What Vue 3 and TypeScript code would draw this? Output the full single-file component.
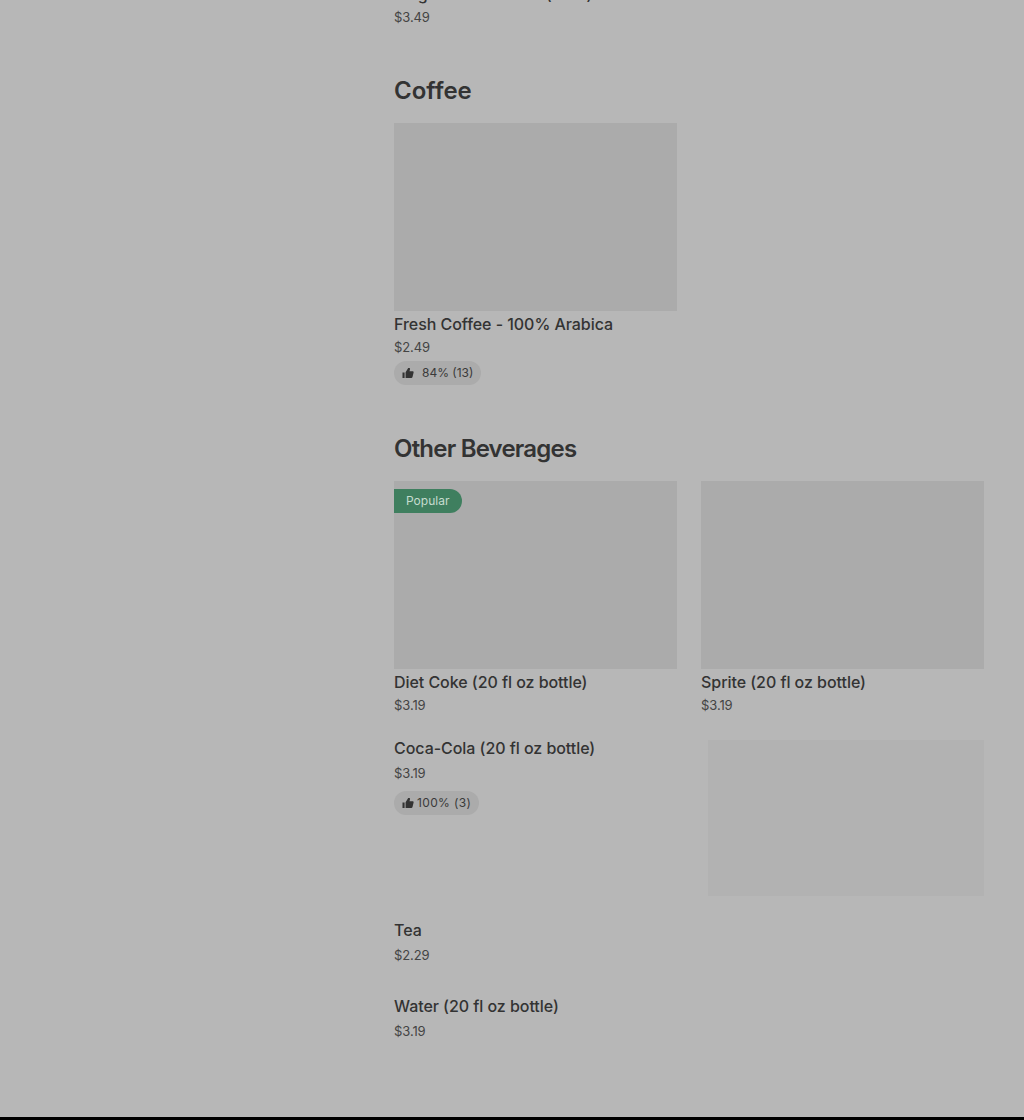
<script setup lang="ts">
interface Item { name: string; price: string; badge?: boolean }
const drinks: Item[] = [
  { name: 'Diet Coke (20 fl oz bottle)', price: '$3.19', badge: true },
  { name: 'Sprite (20 fl oz bottle)', price: '$3.19' },
]
</script>

<template>
  <div class="page">
    <main class="menu">
      <div class="clipped">
        <div class="name">Large White Mocha (16oz)</div>
        <div class="price">$3.49</div>
      </div>

      <section class="section">
        <h2 class="open">Coffee</h2>
        <div class="grid">
          <article>
            <div class="photo"></div>
            <div class="name">Fresh Coffee - 100% Arabica</div>
            <div class="price">$2.49</div>
            <div class="pill pill-wide">
              <svg viewBox="0 0 12 12" width="12" height="12"><path d="M0.5 5.5H2.6V11H0.5ZM3.6 11V5.3L6.2 1H7.2C7.9 1 8.2 1.6 8 2.3L7.5 4.3H10.6C11.4 4.3 11.8 4.9 11.6 5.6L10.5 10.1C10.3 10.7 9.9 11 9.3 11Z" /></svg>
              <span>84% (13)</span>
            </div>
          </article>
        </div>
      </section>

      <section class="section">
        <h2 class="tight">Other Beverages</h2>
        <div class="grid">
          <article v-for="d in drinks" :key="d.name">
            <div class="photo">
              <span v-if="d.badge" class="popular">Popular</span>
            </div>
            <div class="name">{{ d.name }}</div>
            <div class="price">{{ d.price }}</div>
          </article>
        </div>

        <div class="row coca">
          <div>
            <div class="name">Coca-Cola (20 fl oz bottle)</div>
            <div class="price loose">$3.19</div>
            <div class="pill pill-spaced">
              <svg viewBox="0 0 12 12" width="12" height="12"><path d="M0.5 5.5H2.6V11H0.5ZM3.6 11V5.3L6.2 1H7.2C7.9 1 8.2 1.6 8 2.3L7.5 4.3H10.6C11.4 4.3 11.8 4.9 11.6 5.6L10.5 10.1C10.3 10.7 9.9 11 9.3 11Z" /></svg>
              <span>100% (3)</span>
            </div>
          </div>
          <div class="thumb"></div>
        </div>

        <div class="row tea">
          <div>
            <div class="name">Tea</div>
            <div class="price loose">$2.29</div>
          </div>
        </div>

        <div class="row water">
          <div>
            <div class="name">Water (20 fl oz bottle)</div>
            <div class="price loose">$3.19</div>
          </div>
        </div>
      </section>
    </main>
    <footer class="bar"></footer>
  </div>
</template>

<style scoped>
.page {
  width: 1024px;
  height: 1120px;
  overflow: hidden;
  display: flex;
  flex-direction: column;
  background: #b7b7b7;
  font-family: Inter, "Liberation Sans", sans-serif;
  color: #333;
}
.menu {
  flex: 1;
  min-height: 0;
  padding: 0 40px 0 394px;
}
.clipped {
  margin-top: -16px;
}
.section {
  margin-top: 47px;
}
h2 {
  margin: 0 0 17px;
  padding-top: 1px;
  height: 32px;
  box-sizing: border-box;
  font-size: 24px;
  line-height: 31px;
  font-weight: 600;
  color: #333;
}
h2.open {
  letter-spacing: 0;
}
h2.tight {
  letter-spacing: -0.8px;
}
.grid {
  display: grid;
  grid-template-columns: 283px 283px;
  column-gap: 24px;
}
.photo {
  position: relative;
  height: 188px;
  background: #ababab;
  margin-bottom: 3px;
}
.popular {
  position: absolute;
  left: 0;
  top: 8px;
  width: 68px;
  height: 24px;
  box-sizing: border-box;
  padding-left: 12px;
  border-radius: 0 12px 12px 0;
  background: #3f7f5f;
  color: #c6dccf;
  font-size: 12px;
  line-height: 24px;
}
.name {
  font-size: 16px;
  line-height: 20px;
  font-weight: 500;
  letter-spacing: -0.05px;
  color: #333;
}
.price {
  margin-top: 3px;
  font-size: 13px;
  line-height: 20px;
  letter-spacing: -0.1px;
  color: #444;
}
.price.loose {
  margin-top: 5px;
}
.pill {
  display: flex;
  align-items: center;
  gap: 3px;
  width: max-content;
  height: 24px;
  margin-top: 8px;
  padding: 0 8px;
  border-radius: 12px;
  background: #ababab;
  color: #3a3a3a;
  font-size: 12px;
}
.pill span {
  padding-bottom: 1px;
}
article .pill {
  margin-top: 4px;
}
.pill-wide {
  gap: 8px;
}
.pill-spaced {
  letter-spacing: 0.35px;
}
.pill svg {
  fill: #333;
  flex: none;
}
.row {
  display: flex;
  justify-content: space-between;
}
.coca {
  margin-top: 23px;
}
.thumb {
  width: 276px;
  height: 156px;
  margin-top: 2px;
  background: #b2b2b2;
}
.tea {
  margin-top: 24px;
}
.water {
  margin-top: 31px;
}
.bar {
  flex: none;
  height: 3px;
  background: #000;
}
</style>
